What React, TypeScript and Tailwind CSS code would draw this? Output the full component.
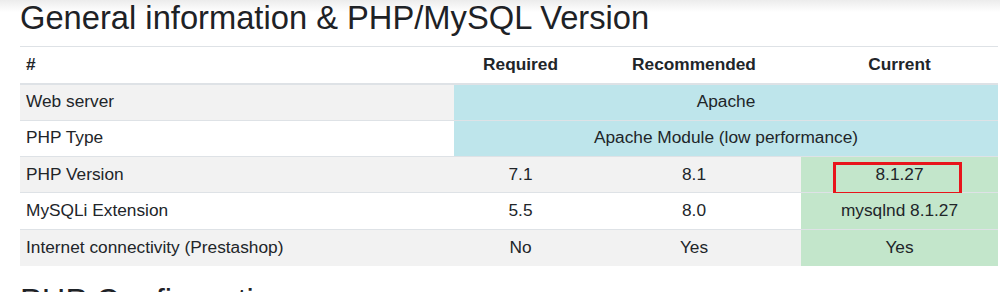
import React from "react";

type Row = {
  label: string;
  span?: string;
  req?: string;
  rec?: string;
  cur?: string;
  mark?: boolean;
};

const rows: Row[] = [
  { label: "Web server", span: "Apache" },
  { label: "PHP Type", span: "Apache Module (low performance)" },
  { label: "PHP Version", req: "7.1", rec: "8.1", cur: "8.1.27", mark: true },
  { label: "MySQLi Extension", req: "5.5", rec: "8.0", cur: "mysqlnd 8.1.27" },
  { label: "Internet connectivity (Prestashop)", req: "No", rec: "Yes", cur: "Yes" },
];

export default function App() {
  return (
    <div
      className="w-[1000px] h-[292px] overflow-hidden bg-white text-[#212529] pl-[20px] pr-[2px] bg-[linear-gradient(to_bottom,#ececec_0px,#ffffff_12px)]"
      style={{ fontFamily: '"Liberation Sans", Arial, sans-serif' }}
    >
      <h2 className="text-[32.7px] leading-[1.08] font-normal text-[#1e2226] m-0">
        General information &amp; PHP/MySQL Version
      </h2>
      <table className="mt-[11px] w-[978px] border-collapse table-fixed text-[17.3px]">
        <colgroup>
          <col className="w-[434px]" />
          <col className="w-[133px]" />
          <col className="w-[214px]" />
          <col className="w-[197px]" />
        </colgroup>
        <thead>
          <tr className="h-[37px]">
            <th className="border-t border-t-[#dee2e6] border-b-2 border-b-[#dee2e6] text-left font-bold px-[6px] py-0">#</th>
            <th className="border-t border-t-[#dee2e6] border-b-2 border-b-[#dee2e6] text-center font-bold px-[6px] py-0">Required</th>
            <th className="border-t border-t-[#dee2e6] border-b-2 border-b-[#dee2e6] text-center font-bold px-[6px] py-0">Recommended</th>
            <th className="border-t border-t-[#dee2e6] border-b-2 border-b-[#dee2e6] text-center font-bold px-[6px] py-0">Current</th>
          </tr>
        </thead>
        <tbody>
          {rows.map((r, i) => {
            const stripe = i % 2 === 0 ? "bg-[#f2f2f2]" : "bg-white";
            return (
              <tr key={r.label} className={`h-[36.4px] ${stripe}`}>
                <td className="border-t border-t-[#dee2e6] px-[6px] py-0 text-left">{r.label}</td>
                {r.span ? (
                  <td colSpan={3} className="border-t border-t-[#dee2e6] px-[6px] py-0 text-center bg-[#bee5eb]">
                    {r.span}
                  </td>
                ) : (
                  <>
                    <td className="border-t border-t-[#dee2e6] px-[6px] py-0 text-center">{r.req}</td>
                    <td className="border-t border-t-[#dee2e6] px-[6px] py-0 text-center">{r.rec}</td>
                    <td className="relative border-t border-t-[#dee2e6] px-[6px] py-0 text-center bg-[#c3e6cb]">
                      {r.cur}
                      {r.mark && (
                        <span className="absolute left-[32px] top-[5px] w-[129px] h-[33px] border-[3px] border-[#e8141b] pointer-events-none" />
                      )}
                    </td>
                  </>
                )}
              </tr>
            );
          })}
        </tbody>
      </table>
      <h2 className="mt-[17px] text-[32.7px] leading-[1.1] font-normal text-[#1e2226] m-0">
        PHP Configuration
      </h2>
    </div>
  );
}
